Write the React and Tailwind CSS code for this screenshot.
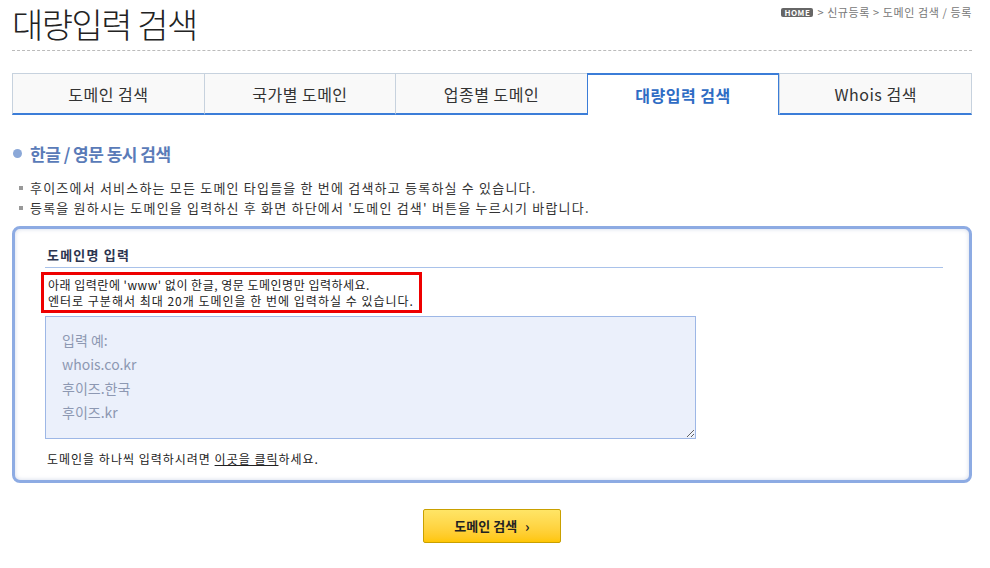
const tabs = ['도메인 검색', '국가별 도메인', '업종별 도메인', '대량입력 검색', 'Whois 검색'];
const ACTIVE = 3;

function Tab({ label, active }) {
  if (active) {
    return (
      <div className="flex-1 h-[42px] flex items-center justify-center bg-white border-x border-t-2 border-[#3b7dd8] text-[#2f6cc4] text-[16px] font-bold tracking-[0.5px]">
        {label}
      </div>
    );
  }
  return (
    <div className="flex-1 h-[42px] flex items-center justify-center bg-[#f9f9f9] border-l border-t border-[#c7d2de] last:border-r border-b-2 border-b-[#3b7dd8] text-[#333] text-[16px] tracking-[0.5px]">
      {label}
    </div>
  );
}

export default function App() {
  return (
    <div className="w-[990px] h-[568px] bg-white overflow-hidden font-['Noto_Sans_CJK_KR','Noto_Sans',sans-serif] text-[#333]">
      <div className="mx-3 w-[960px]">
        {/* Title + breadcrumb */}
        <div className="flex justify-between items-start h-[51px] border-b border-dashed border-[#bbb]">
          <h1 className="text-[34px] leading-[48px] font-light text-[#222] tracking-[-1.5px]">대량입력 검색</h1>
          <div className="flex items-center gap-1 text-[11px] text-[#777] mt-[4px] tracking-[0.6px]">
            <span className="bg-[#666] text-white text-[8px] font-bold leading-[9px] px-[3px] rounded-[2px] tracking-[0.5px]">HOME</span>
            <span>&gt; 신규등록 &gt; 도메인 검색 / 등록</span>
          </div>
        </div>

        {/* Tabs */}
        <div className="flex mt-[22px]">
          {tabs.map((t, i) => (
            <Tab key={t} label={t} active={i === ACTIVE} />
          ))}
        </div>

        {/* Section heading */}
        <div className="flex items-center gap-[8px] mt-[26px]">
          <span className="w-[9px] h-[9px] rounded-full bg-[#8ba8d8] ml-[1px]" />
          <h2 className="text-[17px] font-bold text-[#5a7bb8] tracking-[-0.5px]">한글 / 영문 동시 검색</h2>
        </div>

        <ul className="mt-[11px] text-[13px] leading-[20px] text-[#333] tracking-[1.2px]">
          <li className="flex items-center gap-[7px] pl-[7px]">
            <span className="w-[4px] h-[4px] bg-[#999]" />
            후이즈에서 서비스하는 모든 도메인 타입들을 한 번에 검색하고 등록하실 수 있습니다.
          </li>
          <li className="flex items-center gap-[7px] pl-[7px]">
            <span className="w-[4px] h-[4px] bg-[#999]" />
            등록을 원하시는 도메인을 입력하신 후 화면 하단에서 '도메인 검색' 버튼을 누르시기 바랍니다.
          </li>
        </ul>

        {/* Input box */}
        <div className="mt-[8px] h-[257px] border-[3px] border-[#8dabe3] rounded-[8px] shadow-[inset_0_0_4px_rgba(120,140,190,0.35)] pl-[30px] pr-[26px] pt-[16px]">
          <div className="border-b border-[#a9c2ea] pl-[2px] pb-[3px] text-[13px] font-bold text-[#2c3550] tracking-[1.2px]">도메인명 입력</div>
          <div className="mt-[4px] -ml-[4px] w-[381px] border-[3px] border-[#ee0000] px-[4px] pt-[2px] pb-[1px] text-[12px] leading-[16px] text-[#222]">
            <div className="tracking-[0.5px]">아래 입력란에 'www' 없이 한글, 영문 도메인명만 입력하세요.</div>
            <div className="tracking-[1px]">엔터로 구분해서 최대 20개 도메인을 한 번에 입력하실 수 있습니다.</div>
          </div>
          <textarea
            className="block mt-[3px] w-[651px] h-[123px] bg-[#ebf0fb] border border-[#9db7e6] px-[16px] pt-[11px] text-[14px] leading-[24px] text-[#8d98b2] placeholder:text-[#8d98b2] outline-none resize-y"
            placeholder={'입력 예:\nwhois.co.kr\n후이즈.한국\n후이즈.kr'}
          />
          <p className="mt-[11px] pl-[2px] text-[12px] text-[#222] tracking-[1px]">
            도메인을 하나씩 입력하시려면 <span className="underline">이곳을 클릭</span>하세요.
          </p>
        </div>

        {/* Search button */}
        <div className="flex justify-center mt-[26px]">
          <button className="w-[138px] h-[34px] rounded-[2px] border border-[#c9a000] bg-gradient-to-b from-[#ffe566] to-[#ffc600] text-[13px] font-bold text-[#222] flex items-center justify-center gap-[8px]">
            도메인 검색
            <span className="text-[14px] font-bold leading-none">›</span>
          </button>
        </div>
      </div>
    </div>
  );
}
